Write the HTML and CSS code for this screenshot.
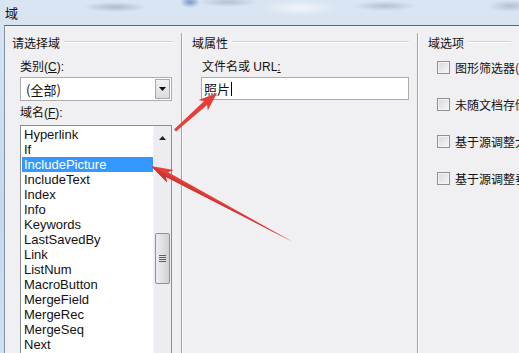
FILE: index.html
```html
<!DOCTYPE html>
<html lang="zh-CN">
<head>
<meta charset="UTF-8">
<meta name="viewport" content="width=device-width, initial-scale=1.0">
<title>域</title>
<link rel="stylesheet" href="styles.css">
</head>
<body>
<div class="window">
    <div class="titlebar">
        <span class="title">域</span>
    </div>
    <div class="frame">
        <div class="dialog">
            <section class="group group-pick">
                <div class="group-head"><span>请选择域</span></div>
                <div class="group-body">
                    <label class="lbl">类别(<u>C</u>):</label>
                    <div class="combo">
                        <span class="combo-text">(全部)</span>
                        <span class="combo-btn">
                            <svg width="7" height="4" viewBox="0 0 7 4"><path d="M0 0h7L3.5 4z" fill="#111"/></svg>
                        </span>
                    </div>
                    <label class="lbl lbl-list">域名(<u>F</u>):</label>
                    <div class="listbox">
                        <ul class="items">
                            <li>Hyperlink</li>
                            <li>If</li>
                            <li class="selected">IncludePicture</li>
                            <li>IncludeText</li>
                            <li>Index</li>
                            <li>Info</li>
                            <li>Keywords</li>
                            <li>LastSavedBy</li>
                            <li>Link</li>
                            <li>ListNum</li>
                            <li>MacroButton</li>
                            <li>MergeField</li>
                            <li>MergeRec</li>
                            <li>MergeSeq</li>
                            <li>Next</li>
                        </ul>
                        <div class="vscroll">
                            <span class="arrow-up">
                                <svg width="7" height="4" viewBox="0 0 7 4"><path d="M0 4h7L3.5 0z" fill="#222"/></svg>
                            </span>
                            <div class="thumb">
                                <span class="grip"></span>
                            </div>
                        </div>
                    </div>
                </div>
            </section>

            <section class="group group-props">
                <div class="group-head"><span>域属性</span></div>
                <div class="group-body">
                    <label class="lbl lbl-url">文件名或 URL<u>:</u></label>
                    <div class="textbox">照片<span class="caret"></span></div>
                </div>
            </section>

            <section class="group group-options">
                <div class="group-head"><span>域选项</span></div>
                <div class="group-body">
                    <div class="opt"><span class="check"></span><span class="opt-text">图形筛选器(I):</span></div>
                    <div class="opt"><span class="check"></span><span class="opt-text">未随文档存储数据</span></div>
                    <div class="opt"><span class="check"></span><span class="opt-text">基于源调整大小</span></div>
                    <div class="opt"><span class="check"></span><span class="opt-text">基于源调整垂直</span></div>
                </div>
            </section>
        </div>
    </div>

    <!-- red annotation arrows -->
    <svg class="arrows" width="519" height="353" viewBox="0 0 519 353">
        <polygon points="217,93 198.6,99.9 203.9,101.3 174,129.5 176,131.5 207.1,105.1 207.8,110.5" fill="#e3403c"/>
        <polygon points="151,166 173.7,170.1 168.1,172.3 293,242 165.7,176.7 167.1,182.5" fill="#e3403c"/>
        <polygon points="151,166 167.1,182.5 165.7,176.7 293,242 166.9,174.5" fill="#d23430"/>
    </svg>
</div>
</body>
</html>
```

FILE: styles.css
```css
body {
    margin: 0;
    width: 519px;
    height: 353px;
    overflow: hidden;
    font-family: "Liberation Sans", "Noto Sans CJK SC", sans-serif;
    font-size: 12px;
    color: #111;
}
.window {
    position: relative;
    height: 353px;
    background:
        radial-gradient(ellipse 32px 5px at 115px 7px, rgba(95, 110, 135, 0.35), transparent),
        radial-gradient(ellipse 10px 6px at 190px 2px, rgba(40, 90, 170, 0.55), transparent),
        radial-gradient(ellipse 30px 5px at 228px 2px, rgba(95, 110, 135, 0.3), transparent),
        radial-gradient(ellipse 32px 5px at 385px 6px, rgba(95, 110, 135, 0.3), transparent),
        radial-gradient(ellipse 22px 6px at 510px 6px, rgba(95, 110, 135, 0.3), transparent),
        radial-gradient(ellipse 40px 8px at 300px 8px, rgba(255, 255, 255, 0.6), transparent),
        linear-gradient(#d9e5f2, #c5d8ec 60%, #d2e0ef);
}
.titlebar {
    height: 25px;
    padding-left: 5px;
    display: flex;
    align-items: center;
}
.title {
    font-family: "Noto Sans CJK SC", sans-serif;
    font-size: 13px;
    color: #111;
}
.frame {
    margin-left: 4px;
    height: 328px;
    border-top: 1px solid #53677f;
    border-left: 1px solid #7f91a6;
    background: #f0eff2;
}
.dialog {
    display: flex;
    height: 100%;
}
.group {
    margin-top: 7px;
    border-right: 1px solid #a3a2a6;
    box-shadow: 1px 0 0 #fff;
}
.group-pick {
    width: 176px;
}
.group-props {
    width: 235px;
}
.group-options {
    flex: 1;
    border-right: none;
    box-shadow: none;
    overflow: hidden;
}
.group-head {
    height: 18px;
    display: flex;
    align-items: center;
    gap: 4px;
    font-family: "Noto Sans CJK SC", sans-serif;
}
.group-head::after {
    content: "";
    flex: 1;
    height: 0;
    border-top: 1px solid #d3d2d6;
    border-bottom: 1px solid #fff;
    margin-right: 8px;
}
.group-pick .group-head {
    padding-left: 7px;
}
.group-props .group-head,
.group-options .group-head {
    padding-left: 10px;
}
.group-body {
    padding-top: 7px;
}
.group-pick .group-body {
    padding-left: 15px;
}
.group-props .group-body,
.group-options .group-body {
    padding-left: 19px;
}
.lbl {
    display: block;
    height: 18px;
    line-height: 18px;
}
.lbl-url {
    padding-left: 1px;
}
.lbl-list {
    margin-top: 3px;
}
.combo {
    margin-top: 1px;
    width: 152px;
    height: 24px;
    box-sizing: border-box;
    border: 1px solid #acacb0;
    background: #fff;
    display: flex;
    align-items: center;
    justify-content: space-between;
    padding: 1px;
}
.combo-text {
    padding-left: 4px;
    font-family: "Noto Sans CJK SC", sans-serif;
    font-size: 13px;
}
.combo-btn {
    width: 15px;
    height: 20px;
    box-sizing: border-box;
    border: 1px solid #a9a9ad;
    background: linear-gradient(#f2f2f4, #dcdce0);
    display: flex;
    align-items: center;
    justify-content: center;
}
.listbox {
    margin-top: 3px;
    width: 152px;
    height: 240px;
    box-sizing: border-box;
    border: 1px solid #8a8c92;
    background: #fff;
    display: flex;
    padding: 1px 0 0 1px;
}
.items {
    list-style: none;
    margin: 0;
    padding: 0;
    width: 132px;
    font-size: 13px;
}
.items li {
    height: 15px;
    line-height: 15px;
    padding-left: 2px;
    color: #111;
}
.items .selected {
    background: #3399ff;
    color: #fff;
}
.vscroll {
    width: 17px;
    margin-top: -1px;
    background: #edecf0;
    border-left: 1px solid #f4f3f6;
    display: flex;
    flex-direction: column;
    align-items: center;
}
.arrow-up {
    height: 17px;
    display: flex;
    align-items: center;
    padding-top: 3px;
}
.thumb {
    margin-top: 87px;
    width: 15px;
    height: 51px;
    box-sizing: border-box;
    border: 1px solid #919196;
    border-radius: 2px;
    background: linear-gradient(90deg, #ededf0, #dcdce1 60%, #cfcfd5);
    display: flex;
    align-items: center;
    justify-content: center;
}
.grip {
    width: 7px;
    height: 7px;
    background: repeating-linear-gradient(#5f5f66 0 1px, transparent 1px 2px);
}
.textbox {
    margin-top: 1px;
    width: 208px;
    height: 23px;
    box-sizing: border-box;
    border: 1px solid #acacb0;
    background: #fff;
    padding-left: 2px;
    display: flex;
    align-items: center;
    font-family: "Noto Sans CJK SC", sans-serif;
    font-size: 13px;
    color: #111;
}
.caret {
    width: 1px;
    height: 14px;
    margin-left: 1px;
    background: #000;
}
.opt {
    height: 18px;
    display: flex;
    align-items: center;
    gap: 5px;
    margin-bottom: 19px;
    white-space: nowrap;
}
.check {
    flex: none;
    width: 13px;
    height: 13px;
    box-sizing: border-box;
    border: 1px solid #8f8f94;
    background: linear-gradient(135deg, #d8d8dc, #f6f6f8);
    box-shadow: inset 0 0 0 1px #f3f3f5;
}
.opt-text {
    font-family: "Noto Sans CJK SC", sans-serif;
}
.arrows {
    position: absolute;
    top: 0;
    left: 0;
    pointer-events: none;
}
```
